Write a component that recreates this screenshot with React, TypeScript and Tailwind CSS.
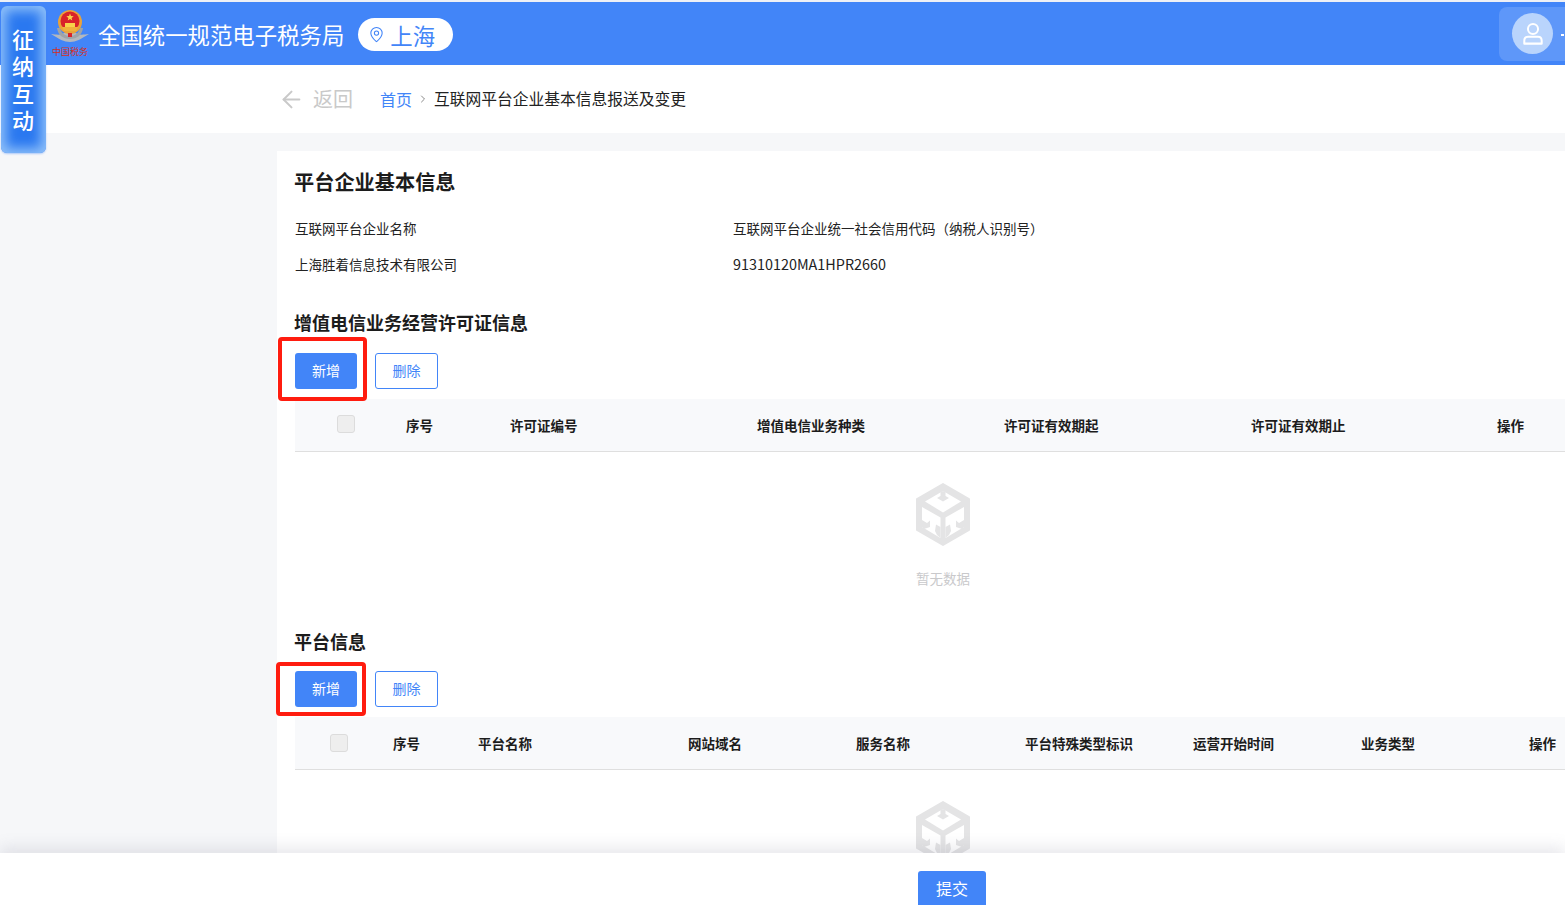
import React from 'react';
import { ArrowLeft, ChevronRight, MapPin } from 'lucide-react';

const licenceColumns = ['序号', '许可证编号', '增值电信业务种类', '许可证有效期起', '许可证有效期止', '操作'];
const platformColumns = ['序号', '平台名称', '网站域名', '服务名称', '平台特殊类型标识', '运营开始时间', '业务类型', '操作'];

function Emblem() {
  return (
    <svg width="38" height="34" viewBox="0 0 38 34">
      {/* wheat wreath */}
      <path d="M0 24 C8 29 13 32 19 32 C25 32 30 29 38 24 C31 25 27 25 25 23 L13 23 C11 25 7 25 0 24Z" fill="#b4b8bd" />
      <path d="M6 18 C7 25 12 29 19 29 C26 29 31 25 32 18 L29 18 C28 23 24 26 19 26 C14 26 10 23 9 18Z" fill="#9ea3a8" />
      {/* shield */}
      <circle cx="19" cy="12" r="12" fill="#e9a23a" />
      <circle cx="19" cy="11" r="9.5" fill="#d9222a" />
      <path d="M19 3.5l1 2.6 2.7.1-2.1 1.7.7 2.6-2.3-1.5-2.3 1.5.7-2.6-2.1-1.7 2.7-.1z" fill="#f7d34a" />
      <path d="M11 17 H27 L25 21 H13Z" fill="#f0b23c" />
      <path d="M14 13 H24 V17 H14Z" fill="#f7d34a" />
      <path d="M17 23 H21 V27 H17Z" fill="#d9222a" />
    </svg>
  );
}

function EmptyCube() {
  return (
    <svg width="56" height="63" viewBox="0 0 56 63" className="block">
      <path
        d="M28 1 L54 16 V47 L28 62 L2 47 V16 Z"
        fill="#e4e4e5"
        stroke="#e4e4e5"
        strokeWidth="2"
        strokeLinejoin="round"
      />
      {/* top face */}
      <path d="M28 8 L46 18.5 L28 29.5 L10 18.5 Z" fill="#fff" />
      <path d="M25.5 9 V13 L22 15 L28 18.5 L34 15 L30.5 13 V9 L28 8 Z" fill="#e4e4e5" />
      {/* left face */}
      <path d="M7 24 L25.5 34.5 V55 L7 44 Z" fill="#fff" />
      <path d="M7 37 L12 40 L15 37.5 L15 44 L9 46 L7 44 Z" fill="#e4e4e5" />
      <path d="M25.5 44 L21 41.5 L20 48 L22 52 L25.5 55 Z" fill="#e4e4e5" />
      {/* right face */}
      <path d="M49 24 L30.5 34.5 V55 L49 44 Z" fill="#fff" />
      <path d="M49 37 L44 40 L41 37.5 L41 44 L47 46 L49 44 Z" fill="#e4e4e5" />
      <path d="M30.5 44 L35 41.5 L36 48 L34 52 L30.5 55 Z" fill="#e4e4e5" />
    </svg>
  );
}

function ButtonRow({ frame }: { frame: React.ReactNode }) {
  return (
    <div className="relative flex gap-[18px]">
      <button className="h-9 w-[62px] rounded-[3px] bg-[#4285f8] pb-[2px] text-sm text-white">新增</button>
      <button className="h-9 w-[63px] rounded-[3px] border border-[#4285f8] bg-white pb-[2px] text-sm text-[#4285f8]">删除</button>
      {frame}
    </div>
  );
}

function EmptyState({ label }: { label?: boolean }) {
  return (
    <div className="flex w-[1296px] flex-col items-center">
      <EmptyCube />
      {label && <div className="mt-[22px] text-[13.5px] leading-5 text-[#c9c9cb]">暂无数据</div>}
    </div>
  );
}

export default function App() {
  return (
    <div className="relative h-[905px] w-full overflow-hidden bg-[#f6f7f9] font-['Noto_Sans_CJK_SC','Liberation_Sans',sans-serif] text-[#1c1c1c]">
      {/* HEADER */}
      <header className="flex h-[65px] items-center justify-between border-t-2 border-[#eef0f6] bg-[#4285f8] pl-[51px]">
        <div className="flex items-center">
          <div className="flex w-[38px] flex-col items-center">
            <Emblem />
            <div className="mt-[2px] h-[12px] whitespace-nowrap text-[9px] leading-[12px] text-[#d42f22]">中国税务</div>
          </div>
          <h1 className="ml-[9px] text-[22.4px] leading-8 text-white">全国统一规范电子税务局</h1>
          <div className="mt-[2px] ml-[14px] flex h-[33px] w-[95px] items-center rounded-full bg-white pl-[10px] text-[#4285f8]">
            <MapPin size={17} strokeWidth={1.5} />
            <span className="ml-[5px] text-[22.4px] leading-8">上海</span>
          </div>
        </div>
        <div className="flex h-[54px] w-[66px] items-center overflow-hidden rounded-l-lg bg-white/15 pl-[13px]">
          <div className="flex h-[41px] w-[41px] shrink-0 items-center justify-center rounded-full bg-[#b9d4fc]">
            <svg width="22" height="24" viewBox="0 0 24 26" fill="none" stroke="#fff" strokeWidth="2.2">
              <circle cx="12" cy="7.5" r="5.5" />
              <path d="M6.5 16 H17.5 C20 16 21.5 18 21.5 20.5 V23.5 H2.5 V20.5 C2.5 18 4 16 6.5 16 Z" strokeLinejoin="round" />
            </svg>
          </div>
          <div className="mt-[3px] ml-2 h-[2px] w-[3px] shrink-0 bg-white" />
        </div>
      </header>

      {/* BREADCRUMB */}
      <div className="flex h-[68px] items-center bg-white pl-[281px]">
        <ArrowLeft size={27} strokeWidth={1.8} className="-ml-[3px] text-[#c9c9c9]" />
        <span className="ml-[8px] text-xl text-[#c9c9c9]">返回</span>
        <span className="mb-[1px] ml-[27px] text-base text-[#4285f8]">首页</span>
        <ChevronRight size={12} strokeWidth={2} className="ml-[5px] text-[#8a8a8a]" />
        <span className="mb-[1px] ml-[5px] text-[15.75px] text-[#222]">互联网平台企业基本信息报送及变更</span>
      </div>

      {/* MAIN CARD */}
      <main className="ml-[277px] mt-[18px] w-[1400px] bg-white px-[18px] pt-[17px]">
        <h2 className="-ml-px text-[20.2px] leading-7 font-bold">平台企业基本信息</h2>
        <div className="mt-[22px] grid grid-cols-[438px_1fr] gap-y-4 text-[13.5px] leading-5 text-[#222]">
          <div>互联网平台企业名称</div>
          <div>互联网平台企业统一社会信用代码（纳税人识别号）</div>
          <div>上海胜着信息技术有限公司</div>
          <div className="text-[14.4px]">91310120MA1HPR2660</div>
        </div>

        <h3 className="mt-[35px] -ml-px text-lg leading-[26px] font-bold">增值电信业务经营许可证信息</h3>
        <div className="mt-[18px]">
          <ButtonRow frame={<div className="absolute -top-4 -left-[17px] h-16 w-[89px] rounded-[4px] border-4 border-[#ff1c0f]" />} />
        </div>
        <div className="mt-[10px] grid h-[53px] grid-cols-[111px_104px_247px_247px_247px_246px_1fr] items-center border-b border-[#dfdfdf] bg-[#f8f9fb] text-[13.5px] font-bold">
          <div className="pl-[42px]">
            <div className="-mt-[3px] h-[18px] w-[18px] rounded-[3px] border border-[#dcdcdc] bg-[#eeeeee]" />
          </div>
          {licenceColumns.map((c) => (
            <div key={c}>{c}</div>
          ))}
        </div>
        <div className="h-[165px] pt-[31px]">
          <EmptyState label />
        </div>

        <h3 className="mt-[11px] -ml-px text-lg leading-[26px] font-bold">平台信息</h3>
        <div className="mt-[17px]">
          <ButtonRow frame={<div className="absolute -top-[9px] -left-[19px] h-[54px] w-[90px] rounded-[4px] border-4 border-[#ff1c0f]" />} />
        </div>
        <div className="mt-[10px] grid h-[53px] grid-cols-[98px_85px_210px_168px_169px_168px_168px_168px_1fr] items-center border-b border-[#dfdfdf] bg-[#f8f9fb] text-[13.5px] font-bold">
          <div className="pl-[35px]">
            <div className="h-[18px] w-[18px] rounded-[3px] border border-[#dcdcdc] bg-[#eeeeee]" />
          </div>
          {platformColumns.map((c) => (
            <div key={c}>{c}</div>
          ))}
        </div>
        <div className="h-[167px] pt-[31px]">
          <EmptyState />
        </div>
      </main>

      {/* SIDE TAB */}
      <div className="absolute top-[6px] left-[1px] flex h-[147px] w-[45px] items-center justify-center rounded-md bg-[#2a78f0] shadow-[inset_0_0_12px_5px_rgba(160,205,250,0.85),0_1px_2px_rgba(66,133,248,0.4)]">
        <span className="mt-[6px] -ml-[1px] text-[22px] leading-[22px] font-medium tracking-[5px] text-white [text-orientation:upright] [writing-mode:vertical-rl]">
          征纳互动
        </span>
      </div>

      {/* FOOTER */}
      <footer className="absolute right-0 bottom-0 left-0 h-[52px] bg-white pt-[18px] pl-[918px] shadow-[0_-6px_14px_rgba(120,120,140,0.16)]">
        <button className="h-9 w-[68px] rounded-[3px] bg-[#4285f8] pb-[2px] text-base text-white">提交</button>
      </footer>
    </div>
  );
}
